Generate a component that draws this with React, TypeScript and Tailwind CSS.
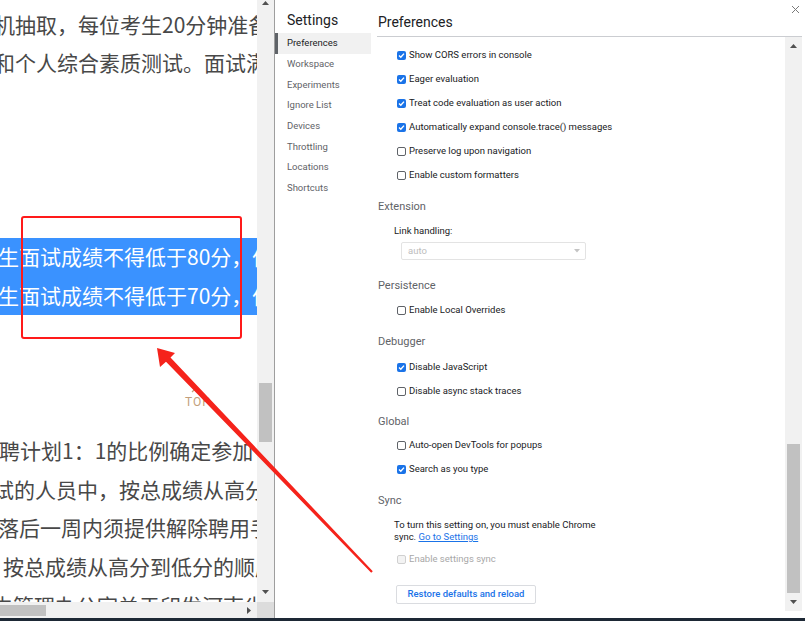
import React from "react";

const CJK = "font-['Noto_Sans_CJK_SC',sans-serif]";
const UI = "font-['Roboto',sans-serif]";

type Line = { t: string; ml: number; hl?: boolean };

const lines: (Line | null | "top")[] = [
  { t: "机抽取，每位考生20分钟准备", ml: -6 },
  { t: "和个人综合素质测试。面试满分", ml: -6 },
  null,
  null,
  null,
  null,
  { t: "生面试成绩不得低于80分，低", ml: -2, hl: true },
  { t: "生面试成绩不得低于70分，低", ml: -2, hl: true },
  "top",
  { t: "聘计划1：1的比例确定参加", ml: -1 },
  { t: "试的人员中，按总成绩从高分", ml: -7 },
  { t: "落后一周内须提供解除聘用手", ml: -2 },
  { t: "，按总成绩从高分到低分的顺序", ml: -18 },
  { t: "由管理办公室关于印发河南省", ml: -8 },
];

function Tri({ dir, cls }: { dir: "up" | "down" | "right"; cls: string }) {
  const pts =
    dir === "up" ? "0,4 3.5,0 7,4" : dir === "down" ? "0,0 7,0 3.5,4" : "0,0 4,3.5 0,7";
  const w = dir === "right" ? 4 : 7;
  const h = dir === "right" ? 7 : 4;
  return (
    <svg width={w} height={h} viewBox={`0 0 ${w} ${h}`} className={cls}>
      <polygon points={pts} fill="#505050" />
    </svg>
  );
}

function Check({ checked, disabled }: { checked?: boolean; disabled?: boolean }) {
  if (checked)
    return (
      <span className="w-[9px] h-[9px] rounded-[2px] bg-[#1a73e8] flex items-center justify-center shrink-0">
        <svg width="7" height="7" viewBox="0 0 7 7">
          <polyline points="1,3.6 2.8,5.3 6,1.6" fill="none" stroke="#fff" strokeWidth="1.4" />
        </svg>
      </span>
    );
  return (
    <span
      className={`w-[9px] h-[9px] rounded-[2px] border shrink-0 ${
        disabled ? "border-[#d0d0d0] bg-[#f3f3f3]" : "border-[#5f6368] bg-white"
      }`}
    />
  );
}

function Row({ label, checked, disabled, cls = "" }: { label: string; checked?: boolean; disabled?: boolean; cls?: string }) {
  return (
    <div className={`h-[24px] flex items-center pl-[19px] gap-[3px] ${cls}`}>
      <Check checked={checked} disabled={disabled} />
      <span className={`text-[9.5px] ${disabled ? "text-[#a8a8a8]" : "text-[#202124]"}`}>{label}</span>
    </div>
  );
}

function Head({ t, cls = "" }: { t: string; cls?: string }) {
  return <div className={`h-[20px] flex items-center text-[11px] text-[#5f6368] ${cls}`}>{t}</div>;
}

export default function App() {
  const side = ["Preferences", "Workspace", "Experiments", "Ignore List", "Devices", "Throttling", "Locations", "Shortcuts"];
  return (
    <div className="relative w-[805px] h-[621px] overflow-hidden bg-white flex flex-col">
      <div className="flex h-[618px]">
        {/* left page */}
        <div className="w-[274px] flex flex-col shrink-0">
          <div className="flex h-[602px]">
            <div className={`w-[257px] overflow-hidden pt-[5px] ${CJK} text-[21px] text-[#484848]`}>
              {lines.map((l, i) => {
                if (l === null) return <div key={i} className="h-[38.75px]" />;
                if (l === "top")
                  return (
                    <div key={i} className="h-[116.25px] pl-[185px] pt-[73px] flex flex-col">
                      <svg width="8" height="5" viewBox="0 0 8 5" className="ml-[6px]">
                        <polyline points="1,4 4,1 7,4" fill="none" stroke="#c39f7b" strokeWidth="1.2" />
                      </svg>
                      <span className={`${UI} text-[12px] leading-[14px] tracking-[1px] text-[#c39f7b] mt-[2px]`}>TOP</span>
                    </div>
                  );
                return (
                  <div
                    key={i}
                    className={`h-[38.75px] flex items-center whitespace-nowrap ${l.hl ? "bg-[#3a92ff] text-white" : ""}`}
                  >
                    <span style={{ marginLeft: l.ml }}>{l.t}</span>
                  </div>
                );
              })}
            </div>
            <div className="w-[17px] bg-[#f1f1f1] relative flex flex-col items-center">
              <Tri dir="up" cls="mt-[1px]" />
              <div className="h-[378px]" />
              <div className="w-[13px] h-[59px] bg-[#c1c1c1]" />
              <div className="flex-1" />
              <Tri dir="down" cls="mb-[8px]" />
            </div>
          </div>
          <div className="flex h-[16px]">
            <div className="w-[257px] bg-[#f1f1f1] flex items-center">
              <div className="w-[46px] h-[11px] bg-[#c1c1c1]" />
              <div className="flex-1" />
              <Tri dir="right" cls="mr-[6px]" />
            </div>
            <div className="w-[17px] bg-[#dcdcdc]" />
          </div>
        </div>
        <div className="w-[1px] bg-[#9e9e9e]" />
        {/* settings */}
        <div className={`flex-1 flex ${UI}`}>
          <div className="w-[96px] shrink-0 flex flex-col">
            <div className="h-[33px] flex items-center pl-[12px] pt-[8px] text-[14px] text-[#202124]">Settings</div>
            {side.map((s, i) => (
              <div
                key={s}
                className={`h-[20.7px] flex items-center text-[9.5px] ${
                  i === 0 ? "bg-[#f1f1f1] border-l-[3px] border-[#5f6368] pl-[9px] text-[#202124]" : "pl-[12px] text-[#5f6368]"
                }`}
              >
                {s}
              </div>
            ))}
          </div>
          <div className="flex-1 flex flex-col">
            <div className="h-[37px] ml-[6px] mr-[3px] border-b border-[#cbcdd1] flex items-end relative">
              <span className="pl-[1px] pb-[3px] text-[14px] text-[#202124]">Preferences</span>
              <svg width="9" height="9" viewBox="0 0 9 9" className="absolute right-[2px] top-[5px]">
                <path d="M1 1 L8 8 M8 1 L1 8" stroke="#7a7a7a" strokeWidth="1" />
              </svg>
            </div>
            <div className="flex h-[574px]">
              <div className="flex-1 pl-[7px] pt-[6px] flex flex-col">
                <Row label="Show CORS errors in console" checked />
                <Row label="Eager evaluation" checked />
                <Row label="Treat code evaluation as user action" checked />
                <Row label="Automatically expand console.trace() messages" checked />
                <Row label="Preserve log upon navigation" />
                <Row label="Enable custom formatters" />
                <Head t="Extension" cls="mt-[10px]" />
                <div className="h-[16px] mt-[6px] flex items-center pl-[16px] text-[9.5px] text-[#202124]">Link handling:</div>
                <div className="ml-[23px] mt-[3px] w-[185px] h-[18px] border border-[#e3e3e3] rounded-[2px] flex items-center justify-between pl-[6px] pr-[5px]">
                  <span className="text-[9.5px] text-[#bdbdbd]">auto</span>
                  <svg width="6" height="4" viewBox="0 0 6 4">
                    <polygon points="0,0 6,0 3,3.5" fill="#c4c4c4" />
                  </svg>
                </div>
                <Head t="Persistence" cls="mt-[16px]" />
                <Row label="Enable Local Overrides" cls="mt-[2px]" />
                <Head t="Debugger" cls="mt-[10px]" />
                <Row label="Disable JavaScript" checked cls="mt-[3px]" />
                <Row label="Disable async stack traces" />
                <Head t="Global" cls="mt-[9px]" />
                <Row label="Auto-open DevTools for popups" cls="mt-[1px]" />
                <Row label="Search as you type" checked />
                <Head t="Sync" cls="mt-[10px]" />
                <div className="mt-[8px] pl-[16px] text-[9.5px] leading-[12px] text-[#202124]">
                  <div>To turn this setting on, you must enable Chrome</div>
                  <div>
                    sync. <span className="text-[#1a73e8] underline">Go to Settings</span>
                  </div>
                </div>
                <Row label="Enable settings sync" disabled cls="mt-[4px]" />
                <div className="ml-[18px] mt-[14px] w-[140px] h-[19px] border border-[#dadce0] rounded-[2px] flex items-center justify-center text-[9.5px] font-medium text-[#1a73e8]">
                  Restore defaults and reload
                </div>
              </div>
              <div className="w-[17px] bg-[#f1f1f1] flex flex-col items-center">
                <Tri dir="up" cls="mt-[7px]" />
                <div className="h-[396px]" />
                <div className="w-[13px] h-[149px] bg-[#c1c1c1]" />
                <div className="flex-1" />
                <Tri dir="down" cls="mb-[7px]" />
              </div>
              <div className="w-[3px]" />
            </div>
          </div>
        </div>
      </div>
      <div className="h-[3px] bg-[#1d2835]" />

      {/* annotations */}
      <div className="absolute left-[21px] top-[216px] w-[221px] h-[123px] border-2 border-[#ff1a1a] rounded-[3px] pointer-events-none" />
      <svg className="absolute left-0 top-0 pointer-events-none" width="805" height="621" viewBox="0 0 805 621">
        <polygon
          points="157,348 175,353 170.5,357.5 372.8,571.2 371.2,572.8 166,361.8 160,367"
          fill="#f5231b"
        />
      </svg>
    </div>
  );
}
